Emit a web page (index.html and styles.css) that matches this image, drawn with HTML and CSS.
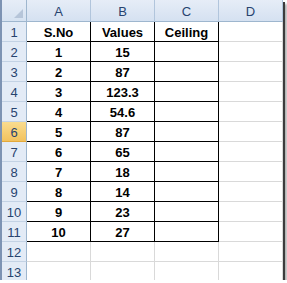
FILE: index.html
```html
<!DOCTYPE html>
<html lang="en">
<head>
<meta charset="UTF-8">
<title>Ceiling</title>
<link rel="stylesheet" href="styles.css">
</head>
<body>
<div class="frame">
    <div class="sheet">
        <div class="corner"><span class="tri"></span></div>
        <div class="colhead">A</div>
        <div class="colhead">B</div>
        <div class="colhead">C</div>
        <div class="colhead">D</div>

        <div class="rowhead">1</div>
        <div class="cell data">S.No</div><div class="cell data">Values</div><div class="cell data">Ceiling</div><div class="cell"></div>
        <div class="rowhead">2</div>
        <div class="cell data">1</div><div class="cell data">15</div><div class="cell data"></div><div class="cell"></div>
        <div class="rowhead">3</div>
        <div class="cell data">2</div><div class="cell data">87</div><div class="cell data"></div><div class="cell"></div>
        <div class="rowhead">4</div>
        <div class="cell data">3</div><div class="cell data">123.3</div><div class="cell data"></div><div class="cell"></div>
        <div class="rowhead">5</div>
        <div class="cell data">4</div><div class="cell data">54.6</div><div class="cell data"></div><div class="cell"></div>
        <div class="rowhead sel">6</div>
        <div class="cell data">5</div><div class="cell data">87</div><div class="cell data"></div><div class="cell"></div>
        <div class="rowhead">7</div>
        <div class="cell data">6</div><div class="cell data">65</div><div class="cell data"></div><div class="cell"></div>
        <div class="rowhead">8</div>
        <div class="cell data">7</div><div class="cell data">18</div><div class="cell data"></div><div class="cell"></div>
        <div class="rowhead">9</div>
        <div class="cell data">8</div><div class="cell data">14</div><div class="cell data"></div><div class="cell"></div>
        <div class="rowhead">10</div>
        <div class="cell data">9</div><div class="cell data">23</div><div class="cell data"></div><div class="cell"></div>
        <div class="rowhead">11</div>
        <div class="cell data">10</div><div class="cell data">27</div><div class="cell data"></div><div class="cell"></div>
        <div class="rowhead">12</div>
        <div class="cell"></div><div class="cell"></div><div class="cell"></div><div class="cell"></div>
        <div class="rowhead">13</div>
        <div class="cell"></div><div class="cell"></div><div class="cell"></div><div class="cell"></div>
    </div>
</div>
</body>
</html>
```

FILE: styles.css
```css
body {
    margin: 0;
    background-color: white;
    font-family: "Liberation Sans", Arial, sans-serif;
}
.frame {
    width: 281px;
    height: 280px;
    border-left: 2px solid #7d93b3;
    overflow: hidden;
    box-shadow: 2px 2px 0 #3c3c3c, 4px 4px 2px #b0b0b0;
}
.sheet {
    display: grid;
    grid-template-columns: 25px 64px 64px 64px 64px;
    grid-template-rows: 22px repeat(13, 20px);
}
.sheet > div {
    box-sizing: border-box;
    display: flex;
    align-items: center;
    justify-content: center;
    padding-top: 2px;
    font-size: 13px;
}
.corner {
    position: relative;
    background: linear-gradient(#e6edf7, #d6e2f1);
    border-right: 1px solid #9eb6ce;
    border-bottom: 1px solid #9eb6ce;
}
.tri {
    position: absolute;
    right: 3px;
    bottom: 3px;
    width: 0;
    height: 0;
    border-left: 9px solid transparent;
    border-bottom: 9px solid #b6c5d9;
}
.colhead {
    background: linear-gradient(#e6edf7, #d5e1f1);
    color: #27436f;
    border-right: 1px solid #b1c5dc;
    border-bottom: 1px solid #9eb6ce;
}
.rowhead {
    background: #e3ebf6;
    color: #27436f;
    border-right: 1px solid #9eb6ce;
    border-bottom: 1px solid #c3d2e4;
}
.rowhead.sel {
    background: linear-gradient(#f9dc8f, #f2c25e);
    border-bottom-color: #e3a93c;
}
.cell {
    border-right: 1px solid #d9d9d9;
    border-bottom: 1px solid #d9d9d9;
}
.cell.data {
    font-weight: bold;
    color: black;
    border-right-color: black;
    border-bottom-color: black;
}
```
